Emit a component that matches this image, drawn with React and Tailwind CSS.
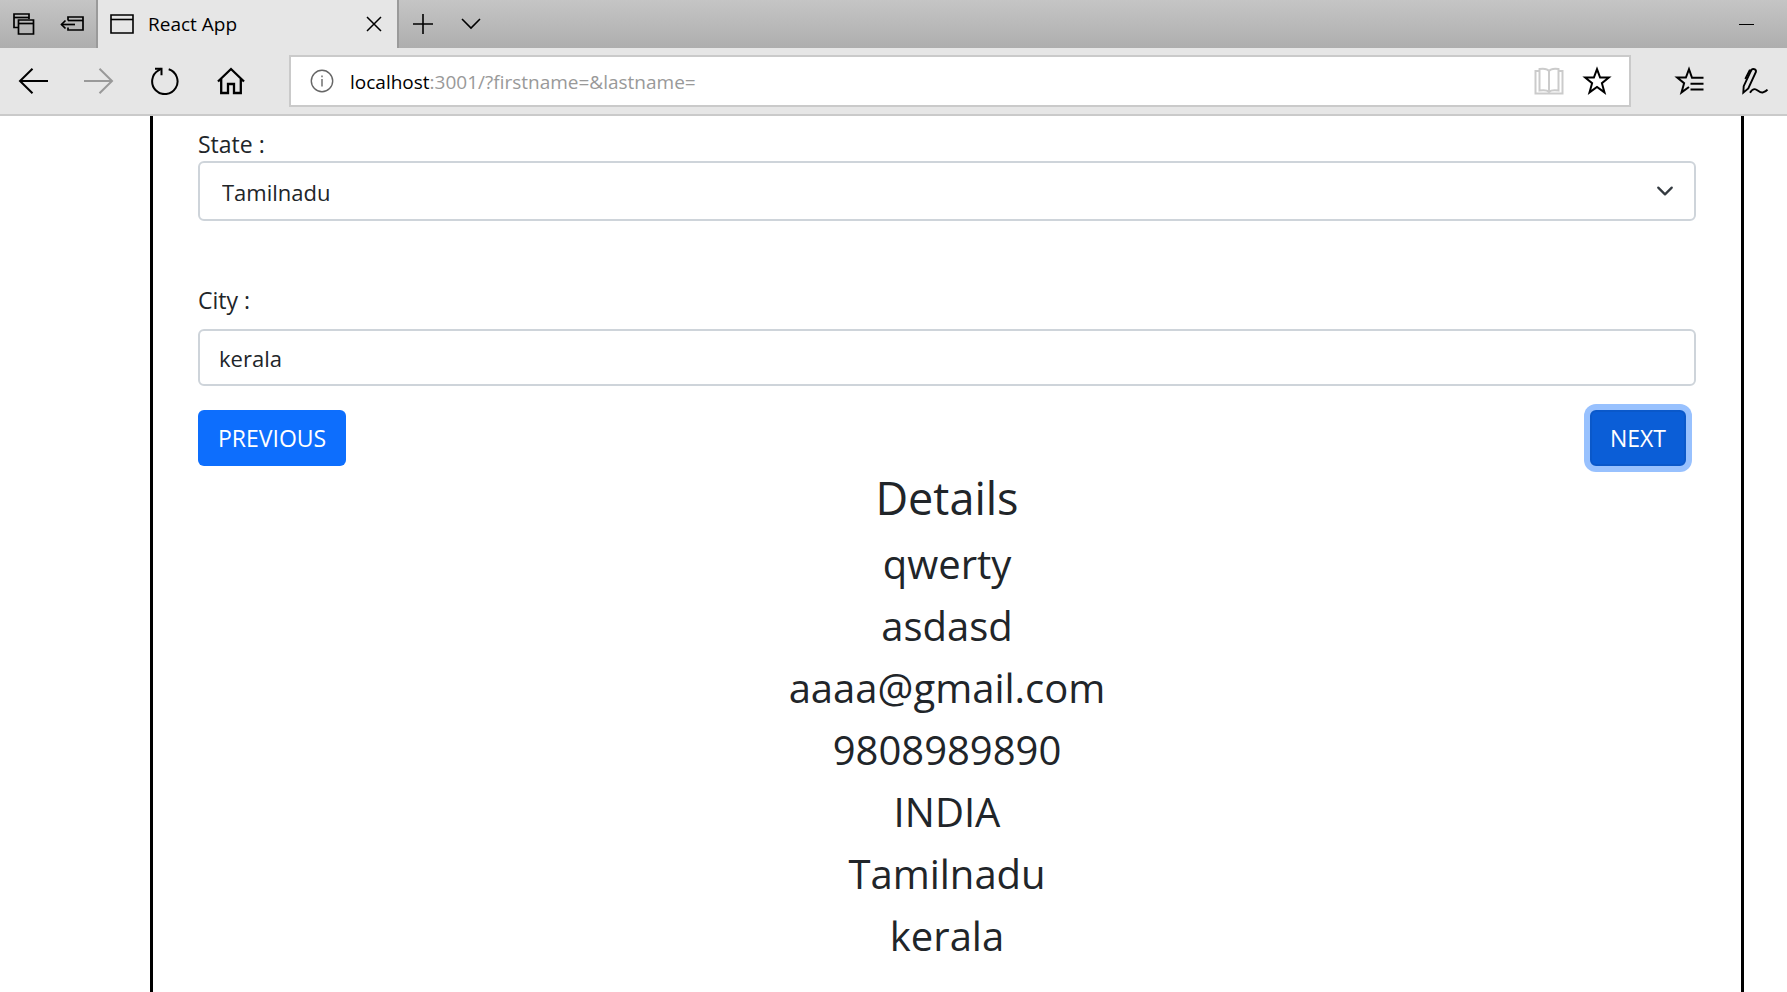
import { useState } from "react";

function Icon({ width, height, stroke = "#000", strokeWidth = 2, className = "", children }) {
  return (
    <svg
      width={width}
      height={height}
      viewBox={`0 0 ${width} ${height}`}
      fill="none"
      stroke={stroke}
      strokeWidth={strokeWidth}
      className={`shrink-0 ${className}`}
      aria-hidden="true"
    >
      {children}
    </svg>
  );
}

function IconButton({ label, className, children }) {
  return (
    <button
      type="button"
      aria-label={label}
      className={`flex shrink-0 items-center justify-center ${className}`}
    >
      {children}
    </button>
  );
}

function TabBar() {
  return (
    <div className="flex h-12 bg-linear-to-b from-[#c5c5c5] to-[#aeaeae]">
      <IconButton label="Tabs you've set aside" className="w-12">
        <Icon width={22} height={22} strokeWidth={1.7}>
          <path d="M5 14.5H1V1h15v5" />
          <path d="M1 4.5h15" />
          <path d="M5.5 7h15v14h-15z" />
          <path d="M5.5 10.5h15" />
        </Icon>
      </IconButton>
      <IconButton label="Set these tabs aside" className="w-12">
        <Icon width={24} height={18} strokeWidth={1.7}>
          <path d="M8 5.500V2h15v13H8v-2.500" />
          <path d="M8 5.500h15" />
          <path d="M15 9.500H1.500" />
          <path d="M5.500 5.500l-4 4 4 4" />
        </Icon>
      </IconButton>
      <div className="flex w-[303px] items-center border-x-2 border-[#9a9a9a] bg-[#e6e6e6] pl-3">
        <Icon width={24} height={20} strokeWidth={1.6}>
          <path d="M1 1h22v18H1z" />
          <path d="M1 5.500h22" />
        </Icon>
        <span className="flex-1 pl-[14px] text-[19px] leading-7 text-black">React App</span>
        <IconButton label="Close tab" className="h-full w-[46px]">
          <Icon width={16} height={16} strokeWidth={1.5}>
            <path d="M1 1l14 14M15 1L1 15" />
          </Icon>
        </IconButton>
      </div>
      <IconButton label="New tab" className="w-12">
        <Icon width={20} height={20}>
          <path d="M10 0v20M0 10h20" strokeWidth={1.6} />
        </Icon>
      </IconButton>
      <IconButton label="Show tab previews" className="w-12">
        <Icon width={20} height={12} strokeWidth={1.6}>
          <path d="M1 1l9 9 9-9" />
        </Icon>
      </IconButton>
      <div className="flex-1" />
      <IconButton label="Minimize" className="w-[81px]">
        <Icon width={15} height={2}>
          <path d="M0 1.500h15" strokeWidth={1} />
        </Icon>
      </IconButton>
    </div>
  );
}

function AddressBar() {
  return (
    <div className="flex h-[52px] flex-1 items-center border-2 border-[#cacaca] bg-white pr-2 pl-[19px]">
      <Icon width={24} height={24} stroke="#666" strokeWidth={1.4}>
        <circle cx="12" cy="12" r="10.700" />
        <path d="M12 10v7.500M12 6.500v1.700" />
      </Icon>
      <a href="#address" className="flex-1 pt-0.5 pl-4 text-[19px] leading-7 text-[#999]">
        <span className="text-black">localhost</span>:3001/?firstname=&amp;lastname=
      </a>
      <IconButton label="Reading view" className="h-full w-12">
        <Icon width={30} height={28} stroke="#cbcbcb" strokeWidth={2}>
          <path d="M15 4C13.500 2 9 1.500 5.500 2v21.500c3.500-.5 8-.2 9.500 1.500 1.500-1.700 6-2 9.500-1.500V2C21 1.500 16.500 2 15 4z" />
          <path d="M15 4v21" />
          <path d="M5.500 4H1.500v22.500h27V4h-4" />
        </Icon>
      </IconButton>
      <IconButton label="Add to favorites" className="h-full w-12">
        <Icon width={30} height={30}>
          <path d="M15 3.200l3.100 8.400h8.700l-6.900 5.600 2.600 9.200L15 21l-7.500 5.400 2.600-9.200-6.900-5.600h8.700z" />
        </Icon>
      </IconButton>
    </div>
  );
}

function Toolbar() {
  return (
    <div className="flex h-[68px] items-center border-b-2 border-[#cacaca] bg-[#e6e6e6]">
      <IconButton label="Back" className="h-full w-[66px]">
        <Icon width={30} height={26}>
          <path d="M30 13H2M14.500 .7L2 13l12.500 12.300" />
        </Icon>
      </IconButton>
      <IconButton label="Forward" className="h-full w-[66px]">
        <Icon width={30} height={26} stroke="#999">
          <path d="M0 13h28M15.500 .7L28 13 15.500 25.300" />
        </Icon>
      </IconButton>
      <IconButton label="Refresh" className="h-full w-[66px]">
        <Icon width={28} height={28}>
          <path d="M17.700 2.300A12.700 12.700 0 1 1 7.500 3.400L10.500 1.600" />
          <path d="M4 1.700h6.500v6.600" />
        </Icon>
      </IconButton>
      <IconButton label="Home" className="h-full w-[66px]">
        <Icon width={28} height={28} strokeWidth={2.300}>
          <path d="M1 14.500L14 2l13 12.500" />
          <path d="M4.200 12v14h6.800v-9h6v9h6.800V12" />
        </Icon>
      </IconButton>
      <div className="flex flex-1 px-[25px]">
        <AddressBar />
      </div>
      <IconButton label="Hub" className="h-full w-[66px]">
        <Icon width={30} height={30}>
          <path d="M29.500 11.800H18L15 3.200l-3.100 8.400H3.200l6.900 5.600-2.600 9.200 7.500-5.400" />
          <path d="M16.500 17.700h13M16.500 23.500h13" />
        </Icon>
      </IconButton>
      <IconButton label="Add notes" className="h-full w-[65px]">
        <Icon width={28} height={30} strokeWidth={1.900}>
          <path d="M2.300 26.700l.4-6.500L10.300 4.200c1-2.300 5.300-1.200 4.600 1.700L7.300 22.500z" />
          <path d="M10.500 4.500H8.600L4.300 13" />
          <path d="M9 26.700c2-3.200 4.300-4.300 6.500-3 2.500 1.600 4 3.500 6.500 2.700 1.700-.6 3.300-1.300 4.500-2.700" />
        </Icon>
      </IconButton>
    </div>
  );
}

const STATES = ["Tamilnadu", "Kerala", "Karnataka"];

export default function App() {
  const [state, setState] = useState("Tamilnadu");
  const [city, setCity] = useState("kerala");
  const details = ["qwerty", "asdasd", "aaaa@gmail.com", "9808989890", "INDIA", state, city];

  return (
    <div className="flex min-h-screen flex-col bg-white font-['Open_Sans','Noto_Sans',sans-serif] text-[#212529]">
      <header>
        <TabBar />
        <Toolbar />
      </header>
      <main className="mr-[43px] ml-[150px] flex flex-1 flex-col border-x-3 border-black px-[45px] pt-[11px]">
        <form className="flex flex-col" onSubmit={(event) => event.preventDefault()}>
          <label htmlFor="state" className="text-[23px] leading-[34px]">
            State :
          </label>
          <div className="relative">
            <select
              id="state"
              value={state}
              onChange={(event) => setState(event.target.value)}
              className="h-[60px] w-full appearance-none rounded-md border-2 border-[#ced4da] bg-white pt-0.5 pr-14 pl-[22px] text-[22px] leading-9"
            >
              {STATES.map((name) => (
                <option key={name}>{name}</option>
              ))}
            </select>
            <svg
              viewBox="0 0 16 16"
              className="pointer-events-none absolute top-[21px] right-[22px] size-[18px]"
              fill="none"
              stroke="#343a40"
              strokeWidth="2"
              strokeLinecap="round"
              strokeLinejoin="round"
              aria-hidden="true"
            >
              <path d="M2 5l6 6 6-6" />
            </svg>
          </div>
          <label htmlFor="city" className="mt-[62px] text-[23px] leading-[34px]">
            City :
          </label>
          <input
            id="city"
            type="text"
            value={city}
            onChange={(event) => setCity(event.target.value)}
            className="mt-3 h-[57px] w-full rounded-md border-2 border-[#ced4da] bg-white px-[19px] text-[22px] leading-9"
          />
          <div className="mt-6 flex justify-between pr-[10px]">
            <button
              type="button"
              className="h-14 rounded-md bg-[#0d6efd] px-5 text-[23px] leading-9 text-white"
            >
              PREVIOUS
            </button>
            <button
              type="submit"
              className="h-14 rounded-md border-2 border-[#0a58ca] bg-[#0b5ed7] px-[18px] text-[23px] leading-9 text-white ring-6 ring-[#98c1fe]"
            >
              NEXT
            </button>
          </div>
        </form>
        <section className="flex flex-col items-center gap-3 pt-[3px] text-center">
          <h2 className="text-[45px] leading-[58px]">Details</h2>
          {details.map((value, index) => (
            <h3 key={index} className="text-[40px] leading-[50px]">
              {value}
            </h3>
          ))}
        </section>
      </main>
    </div>
  );
}
